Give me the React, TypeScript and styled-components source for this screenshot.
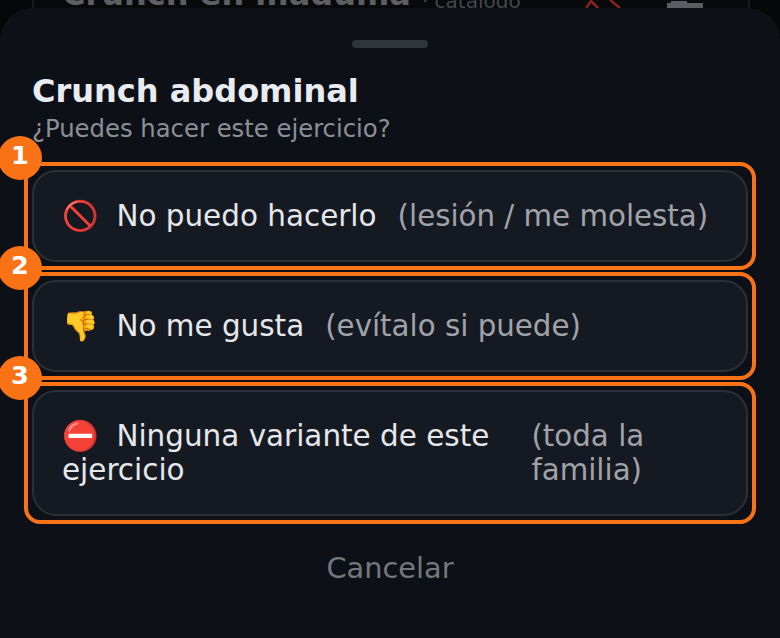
import React from "react";
import styled, { createGlobalStyle } from "styled-components";

const GlobalStyle = createGlobalStyle`
  html, body {
    margin: 0;
    padding: 0;
    background: #060709;
  }
  * {
    box-sizing: border-box;
  }
  body {
    font-family: "DejaVu Sans", "Noto Color Emoji", sans-serif;
    overflow: hidden;
  }
`;

const options = [
  { id: 1, emoji: "🚫", label: "No puedo hacerlo", hint: "(lesión / me molesta)" },
  { id: 2, emoji: "👎", label: "No me gusta", hint: "(evítalo si puede)" },
  { id: 3, emoji: "⛔", label: "Ninguna variante de este ejercicio", hint: "(toda la familia)" },
];

const App = () => {
  return (
    <Page>
      <GlobalStyle />
      <Backdrop>
        <BackdropCard>
          <BackdropTitle>Crunch en maduma</BackdropTitle>
          <BackdropTag>· catálogo</BackdropTag>
          <BackdropIcons>
            <svg width="36" height="8" viewBox="0 0 36 8" fill="none" stroke="#8a2323" strokeWidth="2.5">
              <path d="M1 8 L6 1 L13 8 M25 0 L35 8" />
            </svg>
            <svg width="36" height="8" viewBox="0 0 36 8" fill="#5a5d62">
              <path d="M0 3 H4 V1 H20 V3 H36 V8 H0 Z" />
            </svg>
          </BackdropIcons>
        </BackdropCard>
      </Backdrop>
      <Sheet>
        <Handle />
        <Title>Crunch abdominal</Title>
        <Subtitle>¿Puedes hacer este ejercicio?</Subtitle>
        <OptionList>
          {options.map((option) => (
            <OptionFrame key={option.id}>
              <Badge>{option.id}</Badge>
              <OptionButton>
                <OptionLabel>
                  <Emoji>{option.emoji}</Emoji>
                  {"\u00a0\u00a0"}
                  {option.label}
                </OptionLabel>
                <OptionHint>{option.hint}</OptionHint>
              </OptionButton>
            </OptionFrame>
          ))}
        </OptionList>
        <CancelButton>Cancelar</CancelButton>
      </Sheet>
    </Page>
  );
};

const Page = styled.div`
  width: 780px;
  height: 638px;
  display: flex;
  flex-direction: column;
  overflow: hidden;
  background: #060709;
`;

const Backdrop = styled.div`
  height: 8px;
  flex: none;
  padding: 0 30px 0 32px;
  overflow: hidden;
`;

const BackdropCard = styled.div`
  height: 8px;
  display: flex;
  padding: 0 45px 0 28px;
  border-left: 2px solid #16181c;
  border-right: 2px solid #16181c;
  background: #08090b;
`;

const BackdropTitle = styled.span`
  margin-top: -25px;
  color: #5c5f64;
  font-size: 32px;
  font-weight: 700;
  line-height: 38px;
  white-space: nowrap;
`;

const BackdropTag = styled.span`
  margin: -11px 0 0 11px;
  color: #44474c;
  font-size: 20px;
  line-height: 24px;
  white-space: nowrap;
`;

const BackdropIcons = styled.div`
  display: flex;
  gap: 46px;
  margin-left: auto;
  height: 8px;
  overflow: hidden;
`;

const Sheet = styled.div`
  flex: 1;
  display: flex;
  flex-direction: column;
  padding: 32px 32px 0;
  border-radius: 32px 32px 0 0;
  background: #0d1016;
`;

const Handle = styled.div`
  align-self: center;
  width: 76px;
  height: 8px;
  border-radius: 4px;
  background: #30343b;
`;

const Title = styled.h2`
  margin: 24px 0 0;
  color: #e8ebf0;
  font-size: 32px;
  font-weight: 700;
  line-height: 38px;
`;

const Subtitle = styled.p`
  margin: 4px 0 0;
  color: #8b9098;
  font-size: 24.32px;
  line-height: 30px;
`;

const OptionList = styled.div`
  display: flex;
  flex-direction: column;
  gap: 2px;
  margin: 18px -8px 0;
`;

const OptionFrame = styled.div`
  position: relative;
  padding: 4px;
  border: 4px solid #f97316;
  border-radius: 16px;
`;

const OptionButton = styled.button`
  display: flex;
  align-items: center;
  gap: 21px;
  width: 100%;
  padding: 27px 28px;
  border: 2px solid #2b3038;
  border-radius: 24px;
  background: #151a22;
  font: inherit;
  text-align: left;
`;

const Badge = styled.span`
  position: absolute;
  top: -30px;
  left: -30px;
  display: flex;
  align-items: center;
  justify-content: center;
  width: 44px;
  height: 44px;
  padding-bottom: 4px;
  border-radius: 50%;
  background: #f97316;
  color: #fff;
  font-size: 25.6px;
  font-weight: 700;
  line-height: 1;
`;

const OptionLabel = styled.span`
  color: #e5e7eb;
  font-size: 29.44px;
  line-height: 34px;
`;

const Emoji = styled.span`
  margin-right: -1px;
`;

const OptionHint = styled.span`
  color: #a0a3a9;
  font-size: 29.3px;
  line-height: 34px;
`;

const CancelButton = styled.button`
  align-self: center;
  margin-top: 27px;
  padding: 0;
  border: 0;
  background: none;
  color: #74787e;
  font: inherit;
  font-size: 28.8px;
  line-height: 34px;
`;

export default App;
